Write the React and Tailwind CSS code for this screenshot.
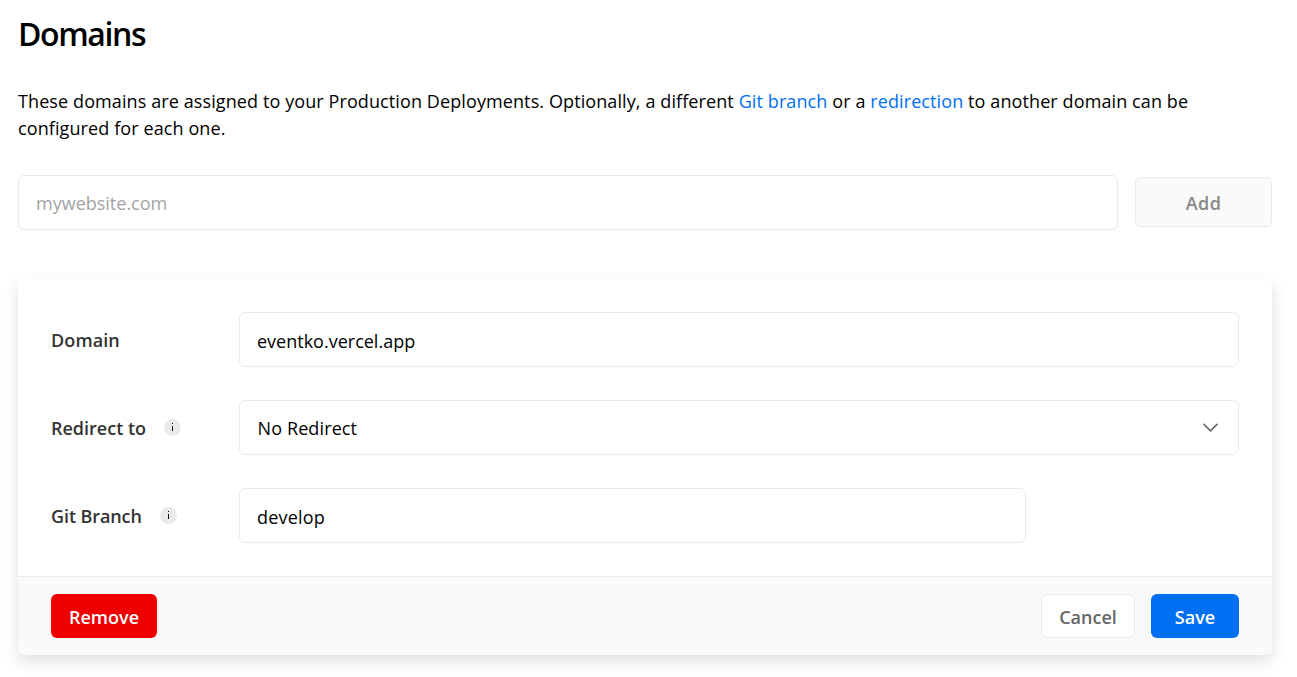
import React from 'react';

const fieldClass =
  'h-[55px] w-full rounded-[6px] border border-[#eaeaea] bg-white px-[17px] text-[18px] text-black outline-none placeholder:text-[#a3a3a3]';

function InfoDot() {
  return (
    <svg width="17" height="17" viewBox="0 0 17 17" className="mb-px shrink-0" aria-hidden="true">
      <circle cx="8.5" cy="8.5" r="8.5" fill="#eaeaea" />
      <rect x="8" y="4" width="1" height="1" fill="#000" />
      <rect x="8" y="7" width="1" height="5" fill="#000" />
    </svg>
  );
}

function Row({ label, info, tracking = 'tracking-normal', children }) {
  return (
    <div className="flex h-[55px] items-center">
      <div className="flex w-[188px] shrink-0 items-center gap-[18px] pt-px text-[18px] font-semibold text-[#333]">
        <span className={tracking}>{label}</span>
        {info && <InfoDot />}
      </div>
      {children}
    </div>
  );
}

export default function App() {
  return (
    <main className="h-[677px] w-[1297px] overflow-hidden bg-white pl-[18px] pr-[25px] pt-[13px] font-['Open_Sans',sans-serif] text-[18px] text-black">
      <h1 className="h-[42px] text-[32px] leading-[42px] font-semibold tracking-[-1.4px]">
        <span>Domains</span>
      </h1>
      <p className="mt-[33px] text-[18px] leading-[27px] tracking-[0.1px] whitespace-nowrap">
        <span>These domains are assigned to your Production Deployments. Optionally, a different </span>
        <a className="text-[#0070f3]">Git branch</a>
        <span> or a </span>
        <a className="text-[#0070f3]">redirection</a>
        <span> to another domain can be</span>
        <br />
        <span>configured for each one.</span>
      </p>

      <div className="mt-[33px] flex h-[55px] items-start gap-[17px]">
        <input className={fieldClass} placeholder="mywebsite.com" />
        <button className="mt-[2px] h-[50px] w-[137px] shrink-0 rounded-[6px] border border-[#eaeaea] bg-[#fafafa] pt-[2px] text-[18px] font-semibold tracking-[0.4px] text-[#888]">
          Add
        </button>
      </div>

      <section className="mt-[49px] h-[376px] overflow-hidden rounded-[6px] bg-white shadow-[0_6px_16px_rgba(0,0,0,0.13)]">
        <div className="flex h-[297px] flex-col gap-[33px] px-[33px] pt-[33px]">
          <Row label="Domain" tracking="tracking-[0.1px]">
            <input className={`${fieldClass} pt-[2px]`} defaultValue="eventko.vercel.app" />
          </Row>
          <Row label="Redirect to" info>
            <div className="flex h-[55px] w-full items-center justify-between rounded-[6px] border border-[#eaeaea] bg-white pr-[20px] pl-[17.5px]">
              <span className="pt-px tracking-[0.12px]">No Redirect</span>
              <svg width="16" height="10" viewBox="0 0 16 10" fill="none" stroke="#666" strokeWidth="1.5" aria-hidden="true">
                <path d="M1.5 0.9 8.5 7.9 15.5 0.9" />
              </svg>
            </div>
          </Row>
          <Row label="Git Branch" info tracking="tracking-[-0.1px]">
            <div className="w-[787px]">
              <input className={`${fieldClass} pt-[2px] tracking-[0.2px]`} defaultValue="develop" />
            </div>
          </Row>
        </div>
        <footer className="flex h-[79px] items-start gap-[16px] border-t border-[#eaeaea] bg-[#fafafa] px-[33px] pt-[17px] text-[18px] font-semibold">
          <button className="mr-auto h-[44px] w-[106px] rounded-[6px] bg-[#ee0000] pt-[2px] text-white">Remove</button>
          <button className="h-[44px] w-[94px] rounded-[6px] border border-[#eaeaea] bg-white pt-[2px] text-[#666]">Cancel</button>
          <button className="h-[44px] w-[88px] rounded-[6px] bg-[#0070f3] pt-[2px] text-white">Save</button>
        </footer>
      </section>
    </main>
  );
}
